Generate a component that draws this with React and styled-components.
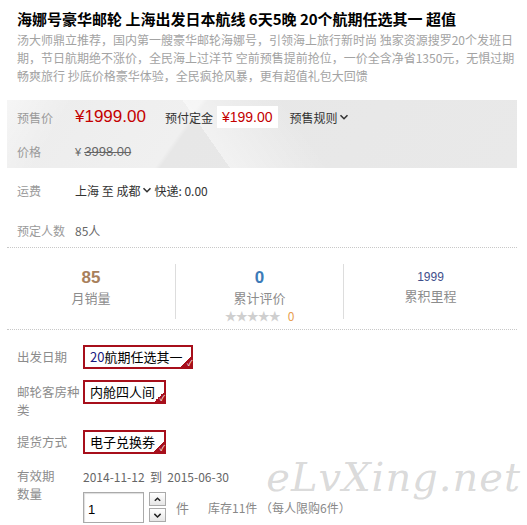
import React from 'react';
import styled, { createGlobalStyle } from 'styled-components';

const GlobalStyle = createGlobalStyle`
    html, body {
        margin: 0;
        padding: 0;
        background: #fff;
    }
    body {
        font-family: "Noto Sans CJK SC", "Liberation Sans", sans-serif;
        font-size: 12px;
        color: #333;
    }
`;

const Chevron = ({ size = 10, color = '#333' }) => (
    <svg width={size} height={size} viewBox="0 0 10 10">
        <path d="M1.5 3.2 L5 6.7 L8.5 3.2" fill="none" stroke={color} strokeWidth="1.6" />
    </svg>
);

function App() {
    return (
        <Page>
            <GlobalStyle />
            <Title>海娜号豪华邮轮 上海出发日本航线 6天5晚 20个航期任选其一 超值</Title>
            <Desc>
                汤大师鼎立推荐，国内第一艘豪华邮轮海娜号，引领海上旅行新时尚 独家资源搜罗20个发班日
                <br />
                期，节日航期绝不涨价，全民海上过洋节 空前预售提前抢位，一价全含净省1350元，无惧过期
                <br />
                畅爽旅行 抄底价格豪华体验，全民疯抢风暴，更有超值礼包大回馈
            </Desc>

            <PriceBox>
                <PriceRow>
                    <Label>预售价</Label>
                    <BigPrice>¥1999.00</BigPrice>
                    <Deposit>预付定金</Deposit>
                    <DepositPrice>¥199.00</DepositPrice>
                    <Rule>
                        预售规则
                        <Chevron />
                    </Rule>
                </PriceRow>
                <PriceRow>
                    <Label>价格</Label>
                    <OldPrice>
                        <span>¥ </span>
                        <s>3998.00</s>
                    </OldPrice>
                </PriceRow>
            </PriceBox>

            <InfoList>
                <InfoRow>
                    <Label>运费</Label>
                    <Value $dark>
                        上海 至 成都
                        <Chevron />
                        快递: 0.00
                    </Value>
                </InfoRow>
                <InfoRow>
                    <Label>预定人数</Label>
                    <Value>85人</Value>
                </InfoRow>
            </InfoList>

            <Stats>
                <Stat>
                    <StatNum $color="#a8805c">85</StatNum>
                    <StatLabel>月销量</StatLabel>
                </Stat>
                <Stat>
                    <StatNum $color="#3d7bb8">0</StatNum>
                    <StatLabel>累计评价</StatLabel>
                    <Stars>
                        ★★★★★<em>0</em>
                    </Stars>
                </Stat>
                <Stat>
                    <StatSmall>1999</StatSmall>
                    <StatLabel>累积里程</StatLabel>
                </Stat>
            </Stats>

            <Options>
                <OptRow>
                    <OptLabel>出发日期</OptLabel>
                    <Choice>
                        <b>20</b>航期任选其一
                    </Choice>
                </OptRow>
                <OptRow>
                    <OptLabel>邮轮客房种类</OptLabel>
                    <Choice>内舱四人间</Choice>
                </OptRow>
                <OptRow>
                    <OptLabel>提货方式</OptLabel>
                    <Choice>电子兑换券</Choice>
                </OptRow>
            </Options>

            <Bottom>
                <DateRow>
                    <OptLabel>有效期</OptLabel>
                    <Value>2014-11-12&nbsp; 到 &nbsp;2015-06-30</Value>
                </DateRow>
                <QtyRow>
                    <OptLabel>数量</OptLabel>
                    <QtyInput>1</QtyInput>
                    <Spinner>
                        <SpinBtn>
                            <svg width="9" height="9" viewBox="0 0 10 10">
                                <path d="M2 6.5 L5 3.5 L8 6.5" fill="none" stroke="#222" strokeWidth="1.6" />
                            </svg>
                        </SpinBtn>
                        <SpinBtn>
                            <Chevron size={9} color="#222" />
                        </SpinBtn>
                    </Spinner>
                    <Unit>件</Unit>
                    <Stock>库存11件 （每人限购6件）</Stock>
                </QtyRow>
                <Watermark>eLvXing.net</Watermark>
            </Bottom>
        </Page>
    );
}

export default App;

const Page = styled.div`
    width: 527px;
    padding: 8px 10px 0 7px;
    box-sizing: border-box;
`;

const Title = styled.h1`
    margin: 0 0 0 10px;
    font-size: 15px;
    line-height: 22px;
    font-weight: bold;
    color: #000;
    white-space: nowrap;
`;

const Desc = styled.p`
    margin: 1px 0 0 10px;
    font-size: 12px;
    line-height: 18px;
    color: #a3a3a3;
    white-space: nowrap;
`;

const PriceBox = styled.div`
    margin-top: 15px;
    height: 68px;
    background:
        linear-gradient(120deg, rgba(255, 255, 255, 0.5) 0%, rgba(255, 255, 255, 0) 12%),
        linear-gradient(55deg, rgba(255, 255, 255, 0) 40%, rgba(255, 255, 255, 0.45) 40%, rgba(255, 255, 255, 0) 58%),
        linear-gradient(125deg, #ececec 0%, #f0f0f0 35%, #e7e7e7 36%, #e9e9e9 100%);
`;

const PriceRow = styled.div`
    display: flex;
    align-items: center;
    height: 34px;
    padding-left: 10px;
`;

const Label = styled.span`
    width: 58px;
    flex-shrink: 0;
    color: #9a9a9a;
    font-size: 12px;
`;

const BigPrice = styled.span`
    font-family: "Liberation Sans", "Noto Sans", sans-serif;
    font-size: 17px;
    color: #c40000;
    margin-right: 19px;
`;

const Deposit = styled.span`
    color: #333;
    margin-right: 4px;
`;

const DepositPrice = styled.span`
    background: #fff;
    padding: 0 5px;
    height: 22px;
    line-height: 22px;
    font-family: "Liberation Sans", "Noto Sans", sans-serif;
    font-size: 14px;
    color: #c40000;
    margin-right: 12px;
`;

const Rule = styled.span`
    display: flex;
    align-items: center;
    gap: 1px;
    color: #333;
`;

const OldPrice = styled.span`
    color: #666;
    font-family: "Liberation Sans", "Noto Sans", sans-serif;
    font-size: 13px;
    span {
        font-size: 11px;
    }
    s {
        text-decoration-thickness: 1px;
    }
`;

const InfoList = styled.div`
    padding: 5px 0 0 10px;
    border-bottom: 1px dotted #c8c8c8;
`;

const InfoRow = styled.div`
    display: flex;
    align-items: center;
    height: 34px;
    margin-bottom: 6px;
    &:last-child {
        margin-bottom: 0;
    }
`;

const Value = styled.span`
    display: flex;
    align-items: center;
    gap: 2px;
    color: ${(p) => (p.$dark ? '#333' : '#666')};
    white-space: pre;
`;

const Stats = styled.div`
    display: grid;
    grid-template-columns: 168px 168px 1fr;
    padding: 16px 0 10px;
    border-bottom: 1px dotted #c8c8c8;
`;

const Stat = styled.div`
    height: 55px;
    padding-top: 4px;
    box-sizing: border-box;
    display: flex;
    flex-direction: column;
    align-items: center;
    & + & {
        border-left: 1px solid #ddd;
    }
`;

const StatNum = styled.div`
    font-family: "Liberation Sans", "Noto Sans", sans-serif;
    font-size: 17px;
    font-weight: bold;
    line-height: 20px;
    color: ${(p) => p.$color};
`;

const StatSmall = styled.div`
    font-family: "Liberation Sans", "Noto Sans", sans-serif;
    font-size: 12px;
    line-height: 18px;
    color: #3f4f8c;
`;

const StatLabel = styled.div`
    font-size: 13px;
    line-height: 20px;
    color: #8c8c8c;
`;

const Stars = styled.div`
    font-size: 12px;
    line-height: 16px;
    color: #cfcfcf;
    letter-spacing: -1px;
    em {
        font-style: normal;
        color: #e8a050;
        margin-left: 8px;
        letter-spacing: 0;
    }
`;

const Options = styled.div`
    padding: 15px 0 0 10px;
    display: flex;
    flex-direction: column;
    gap: 11px;
`;

const OptRow = styled.div`
    display: flex;
    align-items: flex-start;
`;

const OptLabel = styled.span`
    width: 64px;
    margin-right: 2px;
    flex-shrink: 0;
    color: #8c8c8c;
    font-size: 12.5px;
    line-height: 18px;
    padding-top: 3px;
`;

const Choice = styled.span`
    position: relative;
    border: 2px solid #a70f1b;
    padding: 0 9px 0 5px;
    height: 20px;
    line-height: 20px;
    font-size: 13px;
    color: #000;
    white-space: nowrap;
    b {
        font-weight: normal;
        color: #1a1a80;
    }
    &::after {
        content: '✓';
        position: absolute;
        right: -1px;
        bottom: -1px;
        width: 12px;
        height: 12px;
        background: linear-gradient(135deg, transparent 50%, #a70f1b 50%);
        color: #fff;
        font-size: 8px;
        line-height: 14px;
        text-align: right;
    }
`;

const Bottom = styled.div`
    position: relative;
    padding: 13px 0 0 10px;
`;

const DateRow = styled.div`
    display: flex;
    align-items: center;
    height: 18px;
    ${OptLabel} {
        padding-top: 0;
    }
`;

const QtyRow = styled.div`
    display: flex;
    align-items: flex-start;
    margin-top: 0;
    ${OptLabel} {
        padding-top: 0;
    }
`;

const QtyInput = styled.div`
    width: 55px;
    height: 29px;
    margin-top: 7px;
    border: 1px solid #aaa;
    box-shadow: inset 1px 1px 1px #ddd;
    padding-left: 4px;
    line-height: 33px;
    font-family: "Liberation Sans", sans-serif;
    font-size: 13px;
    color: #000;
`;

const Spinner = styled.div`
    display: flex;
    flex-direction: column;
    gap: 2px;
    margin: 7px 0 0 5px;
`;

const SpinBtn = styled.div`
    width: 15px;
    height: 12px;
    border: 1px solid #aaa;
    background: linear-gradient(#fff, #e6e6e6);
    display: flex;
    align-items: center;
    justify-content: center;
`;

const Unit = styled.span`
    margin: 13px 0 0 10px;
    color: #888;
    font-size: 13px;
`;

const Stock = styled.span`
    margin: 14px 0 0 19px;
    color: #888;
    font-size: 12px;
`;

const Watermark = styled.div`
    position: absolute;
    right: -4px;
    top: 0;
    font-family: "DejaVu Serif", "Liberation Serif", serif;
    font-style: italic;
    font-size: 40px;
    letter-spacing: 1px;
    color: rgba(160, 160, 160, 0.4);
    pointer-events: none;
`;
